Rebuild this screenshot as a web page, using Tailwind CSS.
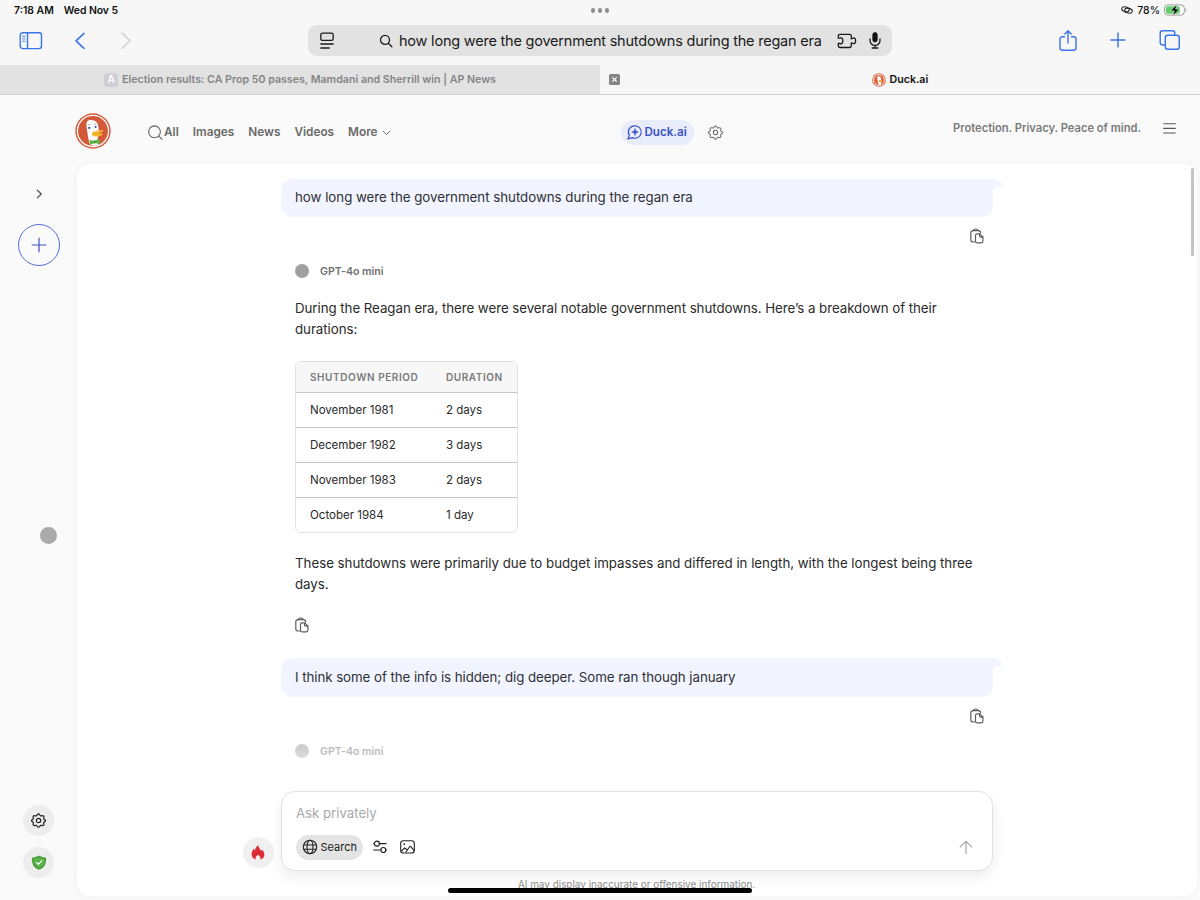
<!DOCTYPE html>
<html lang="en">
<head>
  <meta charset="UTF-8" />
  <meta name="viewport" content="width=device-width, initial-scale=1.0"/>
  <title>Duck.ai</title>
  <script src="https://cdn.jsdelivr.net/npm/@tailwindcss/browser@4"></script>
</head>
<body class="bg-[#fafafa] font-['Inter',sans-serif] text-[#333]">
  <!-- Shared icons -->
  <svg class="hidden">
    <symbol id="copy" viewBox="0 0 16 16" fill="none" stroke="currentColor" stroke-width="1.2" stroke-linejoin="round" stroke-linecap="round">
      <path d="M5.6 14H4a2.2 2.2 0 0 1-2.200-2.200V4.800A2.200 2.200 0 0 1 4 2.600h5.400a2.200 2.200 0 0 1 2.200 2.200"/>
      <path d="M4.200 2.600C4.600 1.600 5.200 1 6.100 1h1.300c.9 0 1.500.6 1.900 1.600"/>
      <path d="M6.500 7.400A1.500 1.500 0 0 1 8 5.900h2.700L13.900 9v4.300a1.500 1.500 0 0 1-1.500 1.500H8a1.500 1.500 0 0 1-1.500-1.500z"/>
      <path d="M10.600 6.100v2a1.100 1.100 0 0 0 1.100 1.100h2"/>
    </symbol>
    <symbol id="gear" viewBox="0 0 16 16" fill="none" stroke="currentColor" stroke-linejoin="round">
      <path d="M8 1c1.500 0 1.300 1.700 2.300 2.100s2.100-.9 3.100.1-.2 2.100.2 3.100 1.900.4 1.900 1.800-1.500.9-1.900 1.900.8 2-.2 3-2.100-.2-3.100.2-.8 1.900-2.300 1.900-1.300-1.500-2.300-1.900-2.100.8-3.100-.2.2-2-.2-3S.5 9.500.5 8.100s1.500-.8 1.900-1.800-.8-2.100.2-3.100 2.100.3 3.100-.1S6.500 1 8 1z"/>
      <circle cx="8" cy="8" r="2.300"/>
    </symbol>
  </svg>

  <div class="relative flex h-[900px] w-[1200px] flex-col overflow-hidden">
    <!-- Status bar -->
    <div class="grid h-5 grid-cols-3 items-center bg-[#f7f7f7] px-[14px] pt-[1px] text-[10.4px] font-semibold text-[#111]">
      <div class="flex gap-[10px]"><span>7:18 AM</span><span class="tracking-[-0.05px]">Wed Nov 5</span></div>
      <div class="flex justify-center gap-[2.5px]">
        <span class="size-[4.5px] rounded-full bg-[#8e8e8e]"></span>
        <span class="size-[4.5px] rounded-full bg-[#8e8e8e]"></span>
        <span class="size-[4.5px] rounded-full bg-[#8e8e8e]"></span>
      </div>
      <div class="-mr-[1px] flex items-center justify-end gap-[4px] font-medium">
        <svg class="h-[8px] w-[12px]" viewBox="0 0 12 8" fill="none" stroke="#222" stroke-width="1.1">
          <ellipse cx="4.500" cy="3.300" rx="3.800" ry="2.400" transform="rotate(12 4.500 3.300)"/>
          <ellipse cx="7.500" cy="4.700" rx="3.800" ry="2.400" transform="rotate(12 7.500 4.700)"/>
        </svg>
        <span>78%</span>
        <svg class="h-[12px] w-[23px]" viewBox="0 0 23 12">
          <rect x=".5" y=".9" width="19.800" height="10.200" rx="3.300" fill="#fff" stroke="#9b9b9b"/>
          <rect x="1.900" y="2.200" width="14" height="7.600" rx="2" fill="#63cd6c"/>
          <path d="M21.500 4.300c1.300.6 1.300 2.800 0 3.400z" fill="#9b9b9b"/>
          <path d="M12.700.6 6.900 6.800h3.500L9.200 11.400l5.900-6.200h-3.600z" fill="#000" stroke="#f7f7f7" stroke-width=".4"/>
        </svg>
      </div>
    </div>

    <!-- Browser toolbar -->
    <div class="flex h-[45px] items-center bg-[#f7f7f7] pb-[4px] text-[#3b74e8]">
      <div class="flex w-[308px] items-center pl-[19px]">
        <svg class="h-[18px] w-[24px]" viewBox="0 0 24 18" fill="none" stroke="currentColor" stroke-width="1.4">
          <rect x="1.200" y=".8" width="21.300" height="15.800" rx="2.500"/>
          <path d="M8.500.8v15.800"/>
          <path d="M3.300 4.300h3M3.300 6.800h3M3.300 9.300h3" stroke-width="1"/>
        </svg>
        <svg class="ml-[31px] h-[18px] w-[12px]" viewBox="0 0 12 18" fill="none" stroke="currentColor" stroke-width="1.6" stroke-linecap="round" stroke-linejoin="round"><path d="M10 1.300 2 8.800l8 7.500"/></svg>
        <svg class="ml-[34px] h-[18px] w-[12px]" viewBox="0 0 12 18" fill="none" stroke="#cfcfcf" stroke-width="1.5" stroke-linecap="round" stroke-linejoin="round"><path d="M2.200 1.300 10.100 8.800l-7.900 7.500"/></svg>
      </div>
      <div class="flex h-[31px] w-[584px] items-center rounded-[9px] bg-[#e2e2e2] text-[#1a1a1a]">
        <svg class="ml-[12px] h-[18px] w-[14px]" viewBox="0 0 14 18" fill="none" stroke="currentColor" stroke-width="1.3" stroke-linecap="round">
          <rect x=".8" y="1.200" width="12.400" height="7.200" rx="1.600"/>
          <path d="M.8 12h12.400M.8 16h8.400"/>
        </svg>
        <svg class="ml-[45px] size-[14px]" viewBox="0 0 14 14" fill="none" stroke="currentColor" stroke-width="1.3" stroke-linecap="round"><circle cx="6" cy="5.900" r="4.500"/><path d="m9.300 9.300 3.600 3.500"/></svg>
        <span class="ml-[6px] w-[423px] text-[14.5px] tracking-[-0.21px] whitespace-nowrap">how long were the government shutdowns during the regan era</span>
        <svg class="ml-[14.5px] h-[16px] w-[20px]" viewBox="0 0 20 16" fill="none" stroke="currentColor" stroke-width="1.3" stroke-linejoin="round">
          <path d="M1.300 5V3.100c0-1.200.6-1.800 1.800-1.800h9.400c1.200 0 1.800.6 1.800 1.800v2.700c.5 0 .9-.1 1.200-.4.400-.3.800-.5 1.200-.5 1.100 0 1.900 1.200 1.900 2.900s-.8 2.900-1.900 2.900c-.4 0-.8-.2-1.200-.5-.3-.3-.7-.4-1.200-.4v2.900c0 1.200-.6 1.800-1.800 1.800H3.100c-1.200 0-1.800-.6-1.800-1.800v-2.200h1.400c.5 0 .8.300 1.300.3 1.100 0 1.800-1.300 1.800-3s-.7-3-1.800-3c-.5 0-.8.3-1.300.3z"/>
        </svg>
        <svg class="ml-[12.5px] h-[17px] w-[12px]" viewBox="0 0 12 17" fill="none" stroke="currentColor" stroke-width="1.3" stroke-linecap="round">
          <rect x="3.700" y=".5" width="4.600" height="9.600" rx="2.300" fill="#111" stroke="#111" stroke-width=".6"/>
          <path d="M1 7v1.400a5 5 0 0 0 10 0V7M6 13.400V16M3.200 16h5.600"/>
        </svg>
      </div>
      <div class="flex flex-1 items-center justify-end pr-[19px]">
        <svg class="h-[22px] w-[18px]" viewBox="0 0 18 22" fill="none" stroke="currentColor" stroke-width="1.4" stroke-linecap="round" stroke-linejoin="round">
          <path d="M5.500 6.800H3.300C1.900 6.800 1 7.700 1 9.100v8.800c0 1.400.9 2.300 2.300 2.300h11.400c1.400 0 2.300-.9 2.300-2.300V9.100c0-1.400-.9-2.300-2.300-2.300h-2.200"/>
          <path d="M9 13V.8M5.800 3.900 9 .8l3.200 3.100"/>
        </svg>
        <svg class="mb-[1px] ml-[33px] size-[16px]" viewBox="0 0 16 16" fill="none" stroke="currentColor" stroke-width="1.4" stroke-linecap="round"><path d="M8 .9v14.200M.9 8h14.200"/></svg>
        <svg class="mb-[1px] ml-[33px] h-[20px] w-[22px]" viewBox="0 0 22 20" fill="none" stroke="currentColor" stroke-width="1.4" stroke-linejoin="round">
          <path d="M6.300 15H3.700C2.100 15 1.200 14.100 1.200 12.500V3.300C1.200 1.700 2.100.8 3.700.8h9.800C15 .8 15.800 1.600 15.800 3.100v2"/>
          <rect x="6.300" y="5.200" width="14" height="14" rx="2.500"/>
        </svg>
      </div>
    </div>

    <!-- Tabs -->
    <div class="flex h-[30px] border-b border-[#cfcfcf] text-[10.65px] font-semibold">
      <div class="flex w-[600px] items-center justify-center gap-1 bg-[#e2e2e2] text-[#858585]">
        <span class="flex size-[14px] items-center justify-center rounded-[3px] bg-[#cfcdd6] text-[10px] text-white">A</span>
        <span>Election results: CA Prop 50 passes, Mamdani and Sherrill win | AP News</span>
      </div>
      <div class="flex flex-1 items-center bg-[#f7f7f7] text-[#111]">
        <svg class="ml-[9px] size-[11px]" viewBox="0 0 11 11"><rect width="11" height="11" rx="1.500" fill="#858585"/><path d="m3.300 3.300 4.400 4.400m0-4.400L3.300 7.700" stroke="#fff" stroke-width="1.200"/></svg>
        <svg class="ml-[252px] size-[14px]" viewBox="0 0 36 36">
          <circle cx="18" cy="18" r="17.500" fill="#d9623f"/>
          <circle cx="18" cy="18" r="14" fill="none" stroke="#fff" stroke-width="2.200"/>
          <path d="M13 10c4-3 9-2 10 4l1 6-1 10c-4 1-6 0-7-2z" fill="#fff"/>
          <path d="M18 18h8l-4 6-5-1z" fill="#f5b32f"/>
        </svg>
        <span class="ml-[3.5px]">Duck.ai</span>
      </div>
    </div>

    <!-- DuckDuckGo header -->
    <header class="flex h-[69px] items-start pl-[75px] text-[11.8px] font-semibold text-[#6a6a6a]">
      <svg class="mt-[18px] size-[36px]" viewBox="0 0 36 36">
        <circle cx="18" cy="18" r="17.700" fill="#d35a38"/>
        <circle cx="18" cy="18" r="15.600" fill="none" stroke="#fff" stroke-width="1.300"/>
        <path d="M12 8.500c1.500-1.800 4.700-2 7.200-.9 3 1.300 4.100 4 4.300 7.200l.5 6.500-1.500 4.500 1 6.200c-3.500 1.200-5.800 1-8.500-.4C13.400 27 12.400 20 11.800 15.500c-.4-2.600-.6-5 .2-7z" fill="#fff"/>
        <path d="M15.500 7.500c-1.200-.7-2-.8-2.800-.6 1.200.4 1.600.7 2 1.300z" fill="#fff"/>
        <circle cx="14.300" cy="14.900" r="1.100" fill="#2d4f8e"/>
        <circle cx="20.600" cy="13.900" r="1" fill="#2d4f8e"/>
        <path d="M12.800 12.300c.6-.7 1.500-.9 2.300-.6M19.500 11.500c.6-.5 1.300-.5 1.900 0" fill="none" stroke="#5b77ad" stroke-width=".7"/>
        <path d="M17 20c1-1.500 2.800-1.900 4.600-2.100l5.300-.9c1.400-.2 1.800.8.700 1.400l-4.200 2c1.300.2 2.800.1 3.800.2.900.2.600 1.200-.4 1.600-2.400 1.100-5.500 1.700-7.900 1.100-1.700-.5-2.500-1.900-1.900-3.300z" fill="#f7b733"/>
        <path d="M19 21.300c2 .2 3.500-.3 5-1" fill="none" stroke="#d98f1c" stroke-width=".5"/>
        <path d="m14.700 26.800 4.500 1.300 5-2.200.9 5.200-5.600-1-4.500 1.700z" fill="#5ab543"/>
        <path d="M18.600 27.500h1.800v2.900h-1.800z" fill="#3c9a32"/>
      </svg>
      <nav class="mt-[25px] ml-[36px] flex h-[26px] w-[474px] items-center">
        <svg class="mb-[2px] size-[17px]" viewBox="0 0 17 17" fill="none" stroke="#666" stroke-width="1.1" stroke-linecap="round"><circle cx="7.500" cy="7.800" r="5.900"/><path d="m11.900 12.200 3.200 3.100"/></svg>
        <a>All</a>
        <a class="ml-[14px]">Images</a>
        <a class="ml-[14px]">News</a>
        <a class="ml-[14px]">Videos</a>
        <a class="ml-[14px]">More</a>
        <svg class="ml-[4px] h-[6px] w-[9px]" viewBox="0 0 9 6" fill="none" stroke="#666" stroke-width="1" stroke-linecap="round" stroke-linejoin="round"><path d="m1.200 1.200 3.300 3.300 3.300-3.300"/></svg>
      </nav>
      <div class="mt-[25px] flex h-[25px] w-[73px] items-center rounded-full bg-[#e8ecfb] pl-[5px] text-[11.6px] text-[#3b53c4]">
        <svg class="size-[17px]" viewBox="0 0 17 17" fill="none" stroke="currentColor" stroke-width="1.2" stroke-linejoin="round">
          <path d="M9 1.800a6.200 6.200 0 1 1-2.600 11.800L2.300 14.900c-.4.100-.5-.2-.3-.5l1.400-3A6.200 6.200 0 0 1 9 1.800z"/>
          <path d="M9 4.600c.4 2.300 1 2.900 3.300 3.400C10 8.500 9.400 9.100 9 11.400 8.600 9.100 8 8.500 5.700 8 8 7.500 8.600 6.900 9 4.600z" fill="currentColor" stroke-width=".6"/>
        </svg>
        <span class="ml-[1.5px]">Duck.ai</span>
      </div>
      <svg class="mt-[30px] ml-[13.5px] size-[15px]" stroke-width="1.1"><use href="#gear"/></svg>
      <div class="mt-[20px] ml-auto flex h-[26px] items-center pr-[24px] text-[11.15px] text-[#7a7a7a]">
        <span>Protection. Privacy. Peace of mind.</span>
        <svg class="ml-[22px] size-[13px]" viewBox="0 0 13 13" fill="none" stroke="#555" stroke-width="1.1" stroke-linecap="round"><path d="M.7 1.800h11.600M.7 6.400h11.600M.7 11h11.600"/></svg>
      </div>
    </header>

    <div class="flex h-[732px]">
      <!-- Collapsed sidebar -->
      <aside class="flex w-[77px] flex-col items-center">
        <svg class="mt-[25px] ml-[1px] h-[10px] w-[7px]" viewBox="0 0 7 10" fill="none" stroke="#555" stroke-width="1.3" stroke-linecap="round" stroke-linejoin="round"><path d="M1.300 1.200 5.300 5l-4 3.900"/></svg>
        <button class="mt-[25px] flex size-[42px] items-center justify-center rounded-full border border-[#5570d6] text-[#3b53c4]">
          <svg class="size-[16px]" viewBox="0 0 16 16" stroke="currentColor" stroke-width="1.2"><path d="M8 .7v14.600M.7 8h14.600"/></svg>
        </button>
        <span class="mt-[261px] ml-[19px] size-[17px] rounded-full bg-[#aaa]"></span>
        <button class="mt-[261px] flex size-[31px] shrink-0 items-center justify-center rounded-full bg-[#ededed] text-[#222]">
          <svg class="size-[15px]" stroke-width="1.3"><use href="#gear"/></svg>
        </button>
        <button class="mt-[11px] flex size-[31px] shrink-0 items-center justify-center rounded-full bg-[#ededed]">
          <svg class="h-[15px] w-[16px]" viewBox="0 0 16 15">
            <path d="M8 .6c1.700 1.300 3.700 1.700 6.200 1.800.6 0 .9.400.9.900.1 5.700-1.600 9.300-6.500 11.300-.4.200-.8.200-1.200 0C2.500 12.600.8 9 .9 3.300c0-.5.3-.9.900-.9C4.300 2.300 6.300 1.900 8 .6z" fill="#469a38"/>
            <path d="M8 2c1.500 1 3.400 1.500 5.800 1.600 0 5-1.500 8-5.800 9.700C3.700 11.600 2.200 8.600 2.200 3.600 4.600 3.500 6.500 3 8 2z" fill="#5bb348"/>
            <path d="m5.400 7.300 2 2L10.900 5.600" fill="none" stroke="#fff" stroke-width="1.2" stroke-linecap="round"/>
          </svg>
        </button>
      </aside>

      <!-- Chat panel -->
      <main class="relative flex w-[1120px] flex-col rounded-[14px] bg-white pt-[15px] pl-[204px] shadow-[0_0_10px_rgba(0,0,0,0.04)]">
        <div class="w-[712px] text-[13.3px] leading-[21px] tracking-[-0.02px]">
          <div class="relative h-[38px] rounded-[12px] rounded-tr-none bg-[#f2f5ff] px-[14px] pt-[8px] text-[#2f2f37]">
            how long were the government shutdowns during the regan era
            <svg class="absolute top-0 left-[711px] h-[14px] w-[11px]" viewBox="0 0 11 14" fill="#f2f5ff"><path d="M0 0h1c4 0 6.500 2 9 5.500.7 1-.1 1.600-1 1.800C3.500 8 .8 9.500.8 14H0z"/></svg>
          </div>
          <div class="flex h-[39px] items-center justify-end pr-[8px]"><svg class="mb-[1px] size-[16px] text-[#5c5c5c]"><use href="#copy"/></svg></div>
          <div class="px-[14px]">
            <div class="flex h-[30px] items-center gap-[11px] text-[10.6px] font-semibold text-[#717171]">
              <span class="size-[14px] rounded-full bg-[#a0a0a0]"></span>GPT-4o mini
            </div>
            <p class="mt-[12px] text-[#2a2a2a] tracking-[-0.05px]">During the Reagan era, there were several notable government shutdowns. Here’s a breakdown of their durations:</p>
            <div class="mt-[21px] w-[223px] overflow-hidden rounded-[6px] border border-[#e2e2e2] text-[11.55px] text-[#2a2a2a]">
              <div class="flex h-[30px] items-center bg-[#f7f7f7] pl-[14px] text-[10px] font-semibold tracking-[0.58px] text-[#7a7a7a]">
                <span class="w-[136px]">SHUTDOWN PERIOD</span><span>DURATION</span>
              </div>
              <div class="flex h-[35px] items-center border-t border-[#c6c6c6] pl-[14px]"><span class="w-[136px]">November 1981</span><span>2 days</span></div>
              <div class="flex h-[35px] items-center border-t border-[#c6c6c6] pl-[14px]"><span class="w-[136px]">December 1982</span><span>3 days</span></div>
              <div class="flex h-[35px] items-center border-t border-[#c6c6c6] pl-[14px]"><span class="w-[136px]">November 1983</span><span>2 days</span></div>
              <div class="flex h-[35px] items-center border-t border-[#c6c6c6] pt-[1px] pl-[14px]"><span class="w-[136px]">October 1984</span><span>1 day</span></div>
            </div>
            <p class="mt-[20px] w-[684px] text-[#2a2a2a]">These shutdowns were primarily due to budget impasses and differed in length, with the longest being three days.</p>
            <div class="mt-[15px] flex h-[30px] items-center"><svg class="-ml-[1px] size-[16px] text-[#5c5c5c]"><use href="#copy"/></svg></div>
          </div>
          <div class="relative mt-[18px] h-[39px] rounded-[12px] rounded-tr-none bg-[#f2f5ff] px-[14px] pt-[9px] tracking-[-0.06px] text-[#2f2f37]">
            I think some of the info is hidden; dig deeper. Some ran though january
            <svg class="absolute top-0 left-[711px] h-[14px] w-[11px]" viewBox="0 0 11 14" fill="#f2f5ff"><path d="M0 0h1c4 0 6.500 2 9 5.500.7 1-.1 1.600-1 1.800C3.500 8 .8 9.500.8 14H0z"/></svg>
          </div>
          <div class="flex h-[39px] items-center justify-end pr-[8px]"><svg class="mb-[1px] size-[16px] text-[#5c5c5c]"><use href="#copy"/></svg></div>
          <div class="flex h-[30px] items-center gap-[11px] px-[14px] text-[10.6px] font-semibold text-[#bdbdbd]">
            <span class="size-[14px] rounded-full bg-linear-to-b from-[#c8c8c8] to-[#dedede]"></span>GPT-4o mini
          </div>
        </div>

        <!-- Prompt box -->
        <div class="mt-[25px] -ml-[38px] flex items-end gap-[7px]">
          <button class="mb-[3px] flex size-[31px] items-center justify-center rounded-full bg-[#f0f0f0]">
            <svg class="mr-[1px] h-[15px] w-[14px]" viewBox="0 0 14 15"><path d="M4.800 14.600C2 13.600.5 11.800.6 9c.1-2.300 1.300-3.900 2.300-5.400.3.800.5 1.500 1 2C4.300 3.500 5 1.500 7.400.2c0 2 .9 3 1.900 4.200.4.500.8 1 1 1.600.4-.3.600-.8.700-1.300C12.500 6 13.400 7.800 13.400 9.500c0 2.400-1.500 4.300-4.200 5.100.7-1.800.1-3-2.100-4.900-2.300 1.700-3.100 3-2.300 4.900z" fill="#dc2c37"/></svg>
          </button>
          <div class="h-[80px] w-[712px] rounded-[14px] border border-[#e2e2e2] bg-white px-[14px] pt-[12px] shadow-[0_6px_14px_rgba(0,0,0,0.07)]">
            <div class="h-[19px] text-[13.2px] leading-[19px] text-[#a9a9a9]">Ask privately</div>
            <div class="mt-[11.5px] flex h-[25px] items-center text-[#222]">
              <div class="flex h-[25px] w-[67px] items-center gap-[3px] rounded-full bg-[#e4e4e4] pl-[6px] text-[11px]">
                <svg class="size-[16px]" viewBox="0 0 16 16" fill="none" stroke="currentColor" stroke-width="1.1"><circle cx="8" cy="8" r="6.700"/><ellipse cx="8" cy="8" rx="3" ry="6.700"/><path d="M1.600 6h12.800M1.600 10.200h12.800"/></svg>
                <span class="-ml-[0.5px]">Search</span>
              </div>
              <svg class="ml-[9.5px] h-[14px] w-[14px]" viewBox="0 0 14 14" fill="none" stroke="currentColor" stroke-width="1.2" stroke-linecap="round"><circle cx="3.900" cy="3.700" r="2.500"/><circle cx="10.300" cy="10" r="2.500"/><path d="M6.600 3.700H13M.7 3.700h.7M.7 10h7M12.900 10h.5"/></svg>
              <svg class="ml-[13.5px] h-[14px] w-[15px]" viewBox="0 0 15 14" fill="none" stroke="currentColor" stroke-width="1.1" stroke-linecap="round" stroke-linejoin="round"><rect x=".7" y=".8" width="13.600" height="12.200" rx="2.600"/><circle cx="4.200" cy="4.100" r=".9" fill="currentColor" stroke="none"/><path d="m1.600 11.200 3-3.400 2 1.700M6 12l3.600-5.300c.4-.5.8-.5 1.200 0l3.200 3.700"/></svg>
              <svg class="mr-[5.5px] ml-auto h-[14px] w-[14px]" viewBox="0 0 14 14" fill="none" stroke="#a0a0a0" stroke-width="1.1" stroke-linecap="round" stroke-linejoin="round"><path d="M7 13.700V1.300M1.200 6.900 7 1.300l5.800 5.600"/></svg>
            </div>
          </div>
        </div>
        <p class="mt-[6px] w-[711px] text-center text-[9.94px] leading-[14px] text-[#8c8c8c]">AI may display inaccurate or offensive information.</p>

        <!-- Scrollbar -->
        <span class="absolute top-[4px] right-[3px] h-[88px] w-[3px] rounded-full bg-[#c4c4c4]"></span>
      </main>
    </div>

    <!-- Home indicator -->
    <span class="absolute bottom-[7px] left-[448px] h-[5px] w-[304px] rounded-full bg-black"></span>
  </div>
</body>
</html>
